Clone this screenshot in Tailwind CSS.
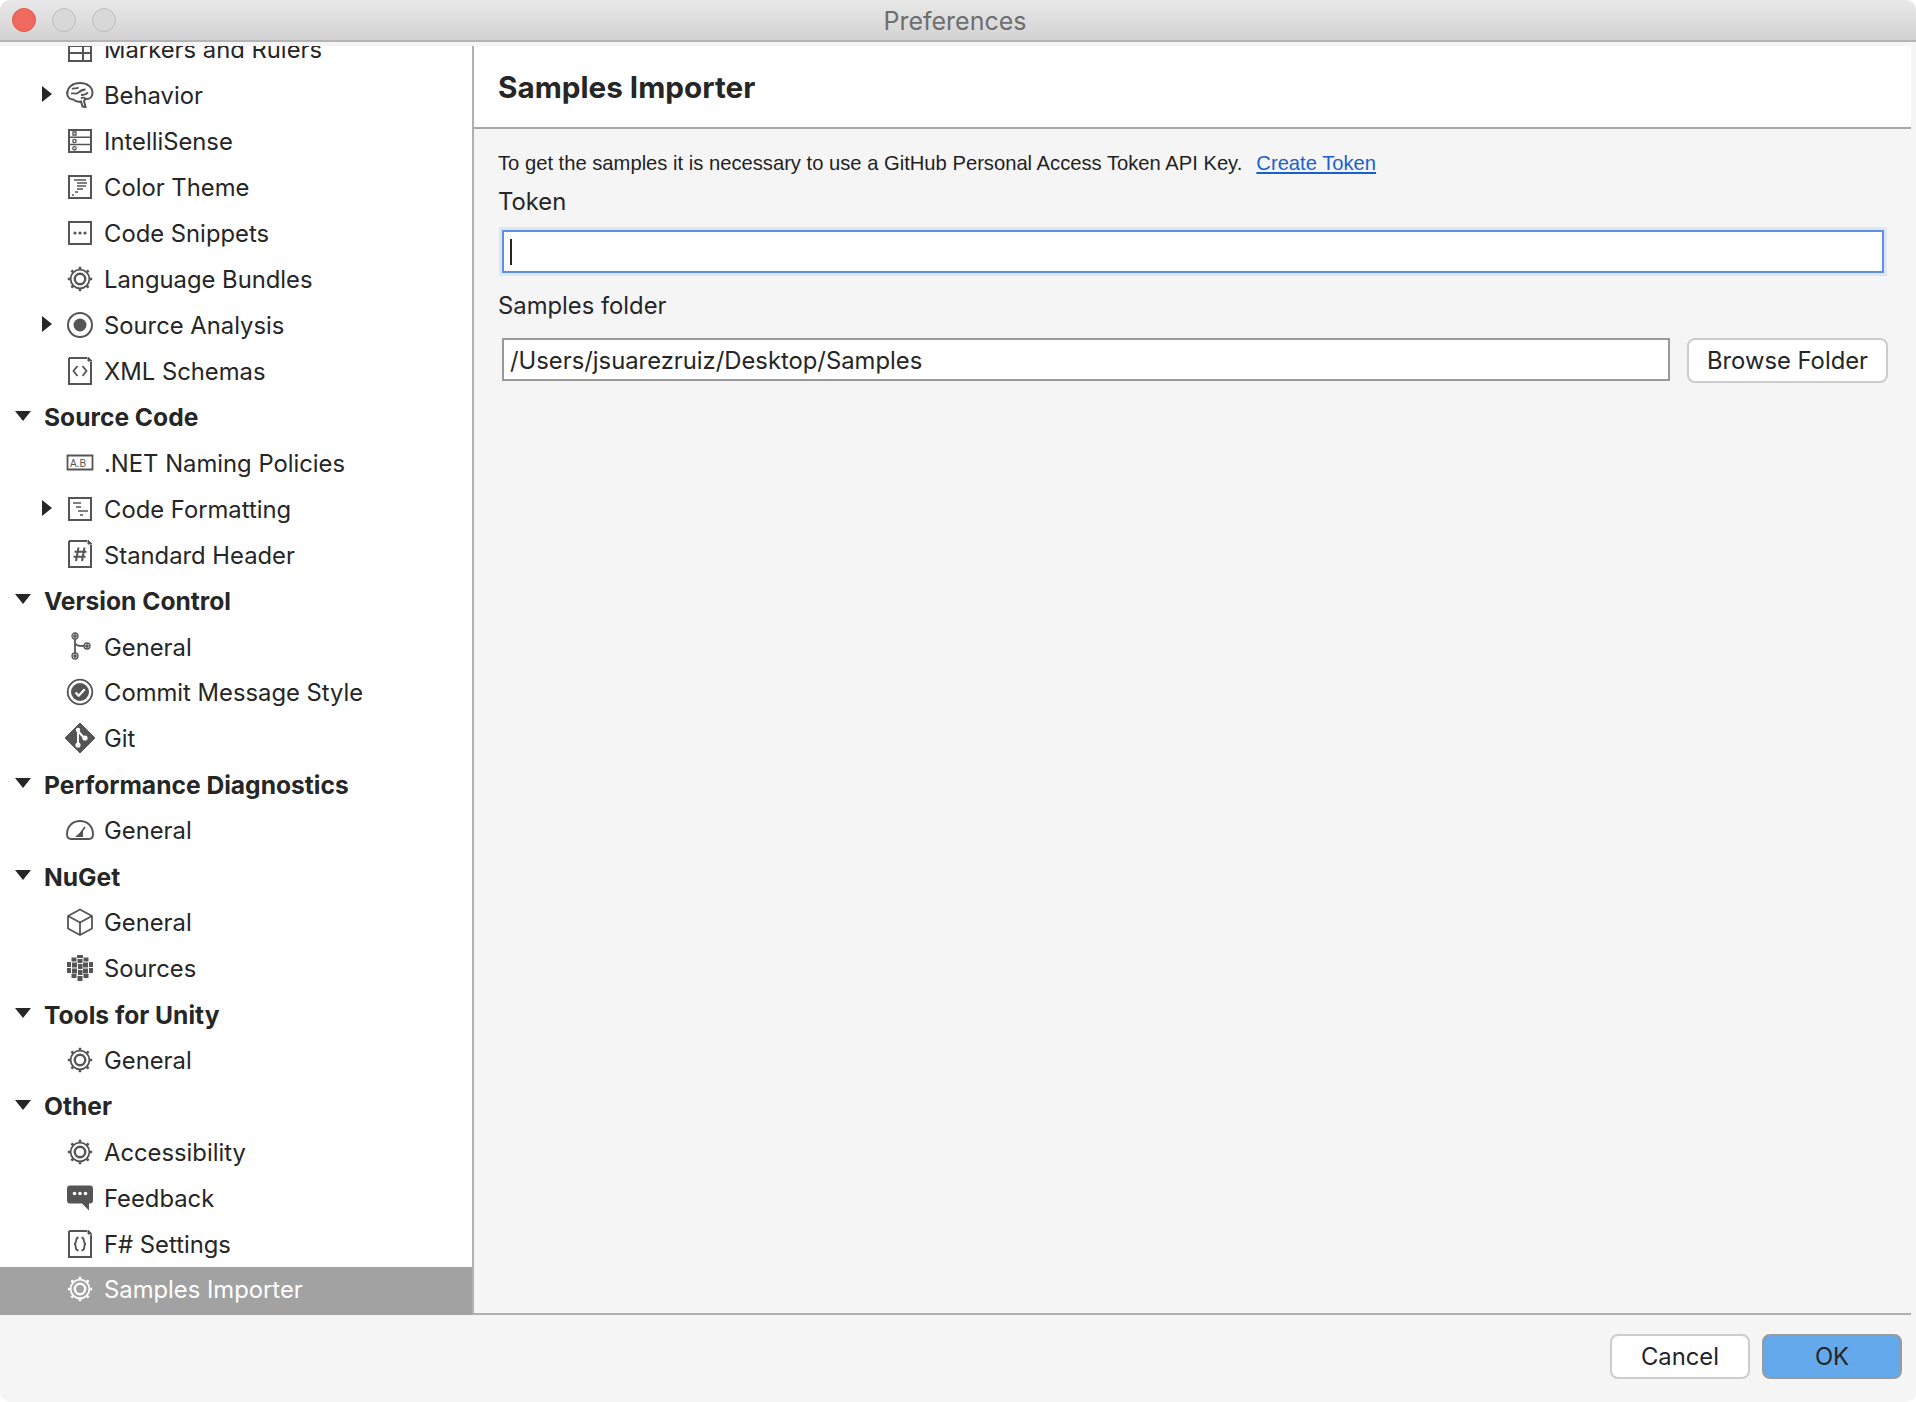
<!DOCTYPE html>
<html lang="en">
<head>
<meta charset="UTF-8">
<title>Preferences</title>
<script src="https://cdn.jsdelivr.net/npm/@tailwindcss/browser@4"></script>
</head>
<body class="bg-white font-['Inter',sans-serif] text-[23.8px] text-[#262626]">
<svg width="0" height="0" class="hidden">
  <symbol id="gear" viewBox="0 0 28 28">
    <circle cx="14" cy="14" r="9.400" fill="none" stroke="currentColor" stroke-width="1.800"/>
    <circle cx="14" cy="14" r="5.200" fill="none" stroke="currentColor" stroke-width="2.400"/>
    <path d="M14 1.800v3M14 23.200v3M1.800 14h3M23.200 14h3M5.400 5.400l2.100 2.100M20.500 20.500l2.100 2.100M5.400 22.600l2.100-2.100M20.500 7.500l2.100-2.100" stroke="currentColor" stroke-width="2.600" fill="none"/>
  </symbol>
  <symbol id="doc" viewBox="0 0 28 28">
    <path d="M3 1h18M3 1v26h22V5" fill="none" stroke="currentColor" stroke-width="2"/>
    <path d="M22 0l4 4h-4z" fill="currentColor"/>
  </symbol>
</svg>
<div class="h-screen flex flex-col rounded-[10px] overflow-hidden bg-[#f5f5f5]">
  <div class="h-[42px] shrink-0 flex items-center border-b-2 border-[#b4b4b4] bg-gradient-to-b from-[#e9e9e9] to-[#d2d2d2]">
    <div class="w-[228px] pl-[12px] flex gap-[16px]">
      <span class="w-[24px] h-[24px] rounded-full bg-[#f0695f] border border-[#e0574e]"></span>
      <span class="w-[24px] h-[24px] rounded-full bg-[#d8d8d8] border border-[#bdbdbd]"></span>
      <span class="w-[24px] h-[24px] rounded-full bg-[#d8d8d8] border border-[#bdbdbd]"></span>
    </div>
    <div class="flex-1 pr-[234px] pt-[3px] text-center text-[#6e6e6e] text-[25px]">Preferences</div>
  </div>
  <div class="h-[1273px] shrink-0 pt-[4px] flex">
    <div class="w-[474px] shrink-0 bg-white border-r-2 border-[#b0b0b0] overflow-hidden">
      <div class="-mt-[19px]">
        <div class="h-[45.96px] flex items-center pl-[42px]"><span class="w-[24px]"></span>
          <svg class="w-[28px] h-[28px] text-[#555] -mt-[2px]" viewBox="0 0 28 28" fill="none" stroke="currentColor" stroke-width="2"><path d="M3 4h22v22H3zM3 11h22M3 18h22M17 11v15"/></svg>
          <span class="ml-[10px]">Markers and Rulers</span></div>
        <div class="h-[45.96px] flex items-center pl-[42px]"><span class="w-[24px]"><svg class="w-[10px] h-[16px] -mt-[4px]" viewBox="0 0 10 16"><path d="M0 0l10 8-10 8z" fill="#262626"/></svg></span>
          <svg class="w-[28px] h-[28px] text-[#555] -mt-[2px]" viewBox="0 0 28 28" fill="none" stroke="currentColor" stroke-width="2"><path d="M1.500 11.500C1.500 6 7 2 14 2s12.500 4 12.500 9.500c0 4-2.500 6.500-6 6.500h-1l-1.500 2 1.500 6-3-.5-1.500-5c-3 .5-6 0-7.500-2-3.500 0-6.500-2.500-6.500-7z"/><path d="M6 8c2-1.500 4 .5 6.500-1.500M5 12.500c3-1 4.500 1.500 7.500-1s3.500-3 7-3M15 14c2.500 0 4 .5 7-2.500M15 17.500c1-1 3-1 4.500 0" stroke-width="1.800"/></svg>
          <span class="ml-[10px]">Behavior</span></div>
        <div class="h-[45.96px] flex items-center pl-[42px]"><span class="w-[24px]"></span>
          <svg class="w-[28px] h-[28px] text-[#555] -mt-[2px]" viewBox="0 0 28 28" fill="none" stroke="currentColor" stroke-width="2"><path d="M3 3h22v22H3z"/><path d="M3 10.300h22M3 17.600h22" stroke-width="1.500"/><path d="M7 5h3v3H7z" stroke-width="1.300"/><circle cx="8.500" cy="14" r="1.700" stroke-width="1.300"/><circle cx="8.500" cy="21.300" r="1.700" stroke-width="1.300"/></svg>
          <span class="ml-[10px]">IntelliSense</span></div>
        <div class="h-[45.96px] flex items-center pl-[42px]"><span class="w-[24px]"></span>
          <svg class="w-[28px] h-[28px] text-[#555] -mt-[2px]" viewBox="0 0 28 28" fill="none" stroke="currentColor" stroke-width="2"><path d="M3 3h22v22H3z"/><path d="M8 7h12M11 10h10M11 13h9M11 16h6M9 19h3M6 22h2" stroke-width="1.500"/></svg>
          <span class="ml-[10px]">Color Theme</span></div>
        <div class="h-[45.96px] flex items-center pl-[42px]"><span class="w-[24px]"></span>
          <svg class="w-[28px] h-[28px] text-[#555] -mt-[2px]" viewBox="0 0 28 28" fill="none" stroke="currentColor" stroke-width="2"><path d="M3 3h22v22H3z"/><circle cx="9" cy="14" r="1.600" fill="currentColor" stroke="none"/><circle cx="14" cy="14" r="1.600" fill="currentColor" stroke="none"/><circle cx="19" cy="14" r="1.600" fill="currentColor" stroke="none"/></svg>
          <span class="ml-[10px]">Code Snippets</span></div>
        <div class="h-[45.96px] flex items-center pl-[42px]"><span class="w-[24px]"></span>
          <svg class="w-[28px] h-[28px] text-[#555] -mt-[2px]"><use href="#gear"/></svg>
          <span class="ml-[10px]">Language Bundles</span></div>
        <div class="h-[45.96px] flex items-center pl-[42px]"><span class="w-[24px]"><svg class="w-[10px] h-[16px] -mt-[4px]" viewBox="0 0 10 16"><path d="M0 0l10 8-10 8z" fill="#262626"/></svg></span>
          <svg class="w-[28px] h-[28px] text-[#555] -mt-[2px]" viewBox="0 0 28 28" fill="none" stroke="currentColor" stroke-width="2"><circle cx="14" cy="14" r="12"/><circle cx="14" cy="14" r="6.500" fill="currentColor" stroke="none"/></svg>
          <span class="ml-[10px]">Source Analysis</span></div>
        <div class="h-[45.96px] flex items-center pl-[42px]"><span class="w-[24px]"></span>
          <svg class="w-[28px] h-[28px] text-[#555] -mt-[2px]" viewBox="0 0 28 28" fill="none" stroke="currentColor"><use href="#doc"/><path d="M11.500 9L7.500 14l4 5M16.500 9l4 5-4 5" stroke-width="1.800"/></svg>
          <span class="ml-[10px]">XML Schemas</span></div>

        <div class="h-[45.96px] flex items-center pl-[15px] font-bold text-[24.6px]"><span class="w-[29px]"><svg class="w-[16px] h-[10px] -mt-[4px]" viewBox="0 0 16 10"><path d="M0 0h16l-8 10z" fill="#262626"/></svg></span>Source Code</div>
        <div class="h-[45.96px] flex items-center pl-[42px]"><span class="w-[24px]"></span>
          <svg class="w-[28px] h-[28px] text-[#555] -mt-[2px]" viewBox="0 0 28 28" fill="none" stroke="currentColor" stroke-width="1.800"><path d="M1.500 6.500h25v14h-25z"/><text x="4" y="17.500" font-size="10" fill="currentColor" stroke="none" font-family="Liberation Sans">A.B</text></svg>
          <span class="ml-[10px]">.NET Naming Policies</span></div>
        <div class="h-[45.96px] flex items-center pl-[42px]"><span class="w-[24px]"><svg class="w-[10px] h-[16px] -mt-[4px]" viewBox="0 0 10 16"><path d="M0 0l10 8-10 8z" fill="#262626"/></svg></span>
          <svg class="w-[28px] h-[28px] text-[#555] -mt-[2px]" viewBox="0 0 28 28" fill="none" stroke="currentColor" stroke-width="2"><path d="M3 3h22v22H3z"/><path d="M7 8h8M10 12h5M12 16h10M14 20h3" stroke-width="1.700"/></svg>
          <span class="ml-[10px]">Code Formatting</span></div>
        <div class="h-[45.96px] flex items-center pl-[42px]"><span class="w-[24px]"></span>
          <svg class="w-[28px] h-[28px] text-[#555] -mt-[2px]" viewBox="0 0 28 28" fill="none" stroke="currentColor"><use href="#doc"/><path d="M12.500 7.500L10 21M18.500 7.500L16 21M8.500 11.800h12M7.500 16.800h12" stroke-width="2"/></svg>
          <span class="ml-[10px]">Standard Header</span></div>

        <div class="h-[45.96px] flex items-center pl-[15px] font-bold text-[24.6px]"><span class="w-[29px]"><svg class="w-[16px] h-[10px] -mt-[4px]" viewBox="0 0 16 10"><path d="M0 0h16l-8 10z" fill="#262626"/></svg></span>Version Control</div>
        <div class="h-[45.96px] flex items-center pl-[42px]"><span class="w-[24px]"></span>
          <svg class="w-[28px] h-[28px] text-[#555] -mt-[2px]" viewBox="0 0 28 28" fill="none" stroke="currentColor" stroke-width="1.300"><circle cx="9" cy="4" r="3"/><circle cx="9" cy="4" r="1.200" fill="currentColor"/><circle cx="9" cy="24" r="3"/><circle cx="9" cy="24" r="1.200" fill="currentColor"/><circle cx="21" cy="14" r="3"/><circle cx="21" cy="14" r="1.200" fill="currentColor"/><path d="M9 7v14M9 11c1 3 4 3 9 3" stroke-width="1.800"/></svg>
          <span class="ml-[10px]">General</span></div>
        <div class="h-[45.96px] flex items-center pl-[42px]"><span class="w-[24px]"></span>
          <svg class="w-[28px] h-[28px] text-[#555] -mt-[2px]" viewBox="0 0 28 28" fill="none" stroke="currentColor"><circle cx="14" cy="14" r="12.300" stroke-width="1.800"/><circle cx="14" cy="14" r="9" fill="currentColor" stroke="none"/><path d="M9.500 14.500l3.200 3.200 6-6.500" stroke="#fff" stroke-width="2.200"/></svg>
          <span class="ml-[10px]">Commit Message Style</span></div>
        <div class="h-[45.96px] flex items-center pl-[42px]"><span class="w-[24px]"></span>
          <svg class="w-[32px] h-[32px] -mx-[2px] text-[#555] -mt-[2px]" viewBox="0 0 32 32"><path d="M16 1l15 15-15 15L1 16z" fill="currentColor" stroke="currentColor" stroke-linejoin="round"/><path d="M14 6v18M14 9l7 8" stroke="#fff" stroke-width="2" fill="none"/><circle cx="14" cy="8" r="2.200" fill="#fff"/><circle cx="14" cy="23" r="2.600" fill="#fff"/><circle cx="21" cy="16" r="2.600" fill="#fff"/></svg>
          <span class="ml-[10px]">Git</span></div>

        <div class="h-[45.96px] flex items-center pl-[15px] font-bold text-[24.6px]"><span class="w-[29px]"><svg class="w-[16px] h-[10px] -mt-[4px]" viewBox="0 0 16 10"><path d="M0 0h16l-8 10z" fill="#262626"/></svg></span>Performance Diagnostics</div>
        <div class="h-[45.96px] flex items-center pl-[42px]"><span class="w-[24px]"></span>
          <svg class="w-[28px] h-[28px] text-[#555] -mt-[2px]" viewBox="0 0 28 28" fill="none" stroke="currentColor" stroke-width="1.900"><path d="M5 23h18c2.500 0 4-2 4-5 0-8-6-13-13-13S1 10 1 18c0 3 1.500 5 4 5z"/><path d="M9 21h8v-7z" fill="currentColor" stroke="none"/><path d="M14 18l5-7" stroke-width="1.700"/></svg>
          <span class="ml-[10px]">General</span></div>

        <div class="h-[45.96px] flex items-center pl-[15px] font-bold text-[24.6px]"><span class="w-[29px]"><svg class="w-[16px] h-[10px] -mt-[4px]" viewBox="0 0 16 10"><path d="M0 0h16l-8 10z" fill="#262626"/></svg></span>NuGet</div>
        <div class="h-[45.96px] flex items-center pl-[42px]"><span class="w-[24px]"></span>
          <svg class="w-[28px] h-[28px] text-[#555] -mt-[2px]" viewBox="0 0 28 28" fill="none" stroke="currentColor" stroke-width="1.800"><path d="M14 1.500l12 6.500v12.500l-12 6.500-12-6.500V8zM3 8.500l11 6 11-6M14 14.500V26" stroke-linejoin="round"/></svg>
          <span class="ml-[10px]">General</span></div>
        <div class="h-[45.96px] flex items-center pl-[42px]"><span class="w-[24px]"></span>
          <svg class="w-[28px] h-[28px] text-[#555] -mt-[2px]" viewBox="0 0 28 28" fill="currentColor"><path d="M11 1h6v3h-6zM5.500 3.500h5v4h-5zM11.500 5h5v4h-5zM17.500 3.500h5v4h-5zM1 8h4v5H1zM6 8.500h5v5H6zM12 10h4.500v5H12zM17 8.500h5v5h-5zM23 8h4v5h-4zM1 14h4v5H1zM6 14.500h5v5H6zM12 16h4.500v5H12zM17 14.500h5v5h-5zM23 14h4v5h-4zM5.500 20h5v4h-5zM17.500 20h5v4h-5zM11.500 22h5v5h-5z"/></svg>
          <span class="ml-[10px]">Sources</span></div>

        <div class="h-[45.96px] flex items-center pl-[15px] font-bold text-[24.6px]"><span class="w-[29px]"><svg class="w-[16px] h-[10px] -mt-[4px]" viewBox="0 0 16 10"><path d="M0 0h16l-8 10z" fill="#262626"/></svg></span>Tools for Unity</div>
        <div class="h-[45.96px] flex items-center pl-[42px]"><span class="w-[24px]"></span>
          <svg class="w-[28px] h-[28px] text-[#555] -mt-[2px]"><use href="#gear"/></svg>
          <span class="ml-[10px]">General</span></div>

        <div class="h-[45.96px] flex items-center pl-[15px] font-bold text-[24.6px]"><span class="w-[29px]"><svg class="w-[16px] h-[10px] -mt-[4px]" viewBox="0 0 16 10"><path d="M0 0h16l-8 10z" fill="#262626"/></svg></span>Other</div>
        <div class="h-[45.96px] flex items-center pl-[42px]"><span class="w-[24px]"></span>
          <svg class="w-[28px] h-[28px] text-[#555] -mt-[2px]"><use href="#gear"/></svg>
          <span class="ml-[10px]">Accessibility</span></div>
        <div class="h-[45.96px] flex items-center pl-[42px]"><span class="w-[24px]"></span>
          <svg class="w-[28px] h-[28px] text-[#555] -mt-[2px]" viewBox="0 0 28 28"><path d="M4 1.500h20a3 3 0 0 1 3 3v12a3 3 0 0 1-3 3h-1v7l-7-7H4a3 3 0 0 1-3-3v-12a3 3 0 0 1 3-3z" fill="currentColor"/><circle cx="8.500" cy="9.500" r="1.800" fill="#fff"/><circle cx="14" cy="9.500" r="1.800" fill="#fff"/><circle cx="19.500" cy="9.500" r="1.800" fill="#fff"/></svg>
          <span class="ml-[10px]">Feedback</span></div>
        <div class="h-[45.96px] flex items-center pl-[42px]"><span class="w-[24px]"></span>
          <svg class="w-[28px] h-[28px] text-[#555] -mt-[2px]" viewBox="0 0 28 28" fill="none" stroke="currentColor"><use href="#doc"/><path d="M12.500 7.500c-4 0-1 6.500-4.500 6.500 3.500 0-.5 6.500 4.500 6.500M15.500 7.500c4 0 1 6.500 4.500 6.500-3.500 0 .5 6.500-4.500 6.500" stroke-width="1.800"/></svg>
          <span class="ml-[10px]">F# Settings</span></div>
        <div class="h-[49px] -mt-[1px] pb-[3px] flex items-center pl-[42px] bg-[#a2a2a2] text-white"><span class="w-[24px]"></span>
          <svg class="w-[28px] h-[28px] text-white -mt-[2px]"><use href="#gear"/></svg>
          <span class="ml-[10px]">Samples Importer</span></div>
      </div>
    </div>
    <div class="flex-1 mr-[5px] flex flex-col border-b-2 border-[#b0b0b0]">
      <div class="h-[83px] shrink-0 bg-white border-b-2 border-[#a8a8a8] pl-[24px] pt-[1px] flex items-center font-bold text-[29.7px]">Samples Importer</div>
      <div class="flex-1 pl-[24px] pr-[22px] pt-[20px]">
        <div class="flex items-center h-[28px] font-['Liberation_Sans',sans-serif] text-[20.2px] text-[#1f1f1f]">
          <span>To get the samples it is necessary to use a GitHub Personal Access Token API Key.</span>
          <a class="ml-[14px] text-[#1a5fd0] underline">Create Token</a>
        </div>
        <div class="mt-[9px] h-[32px] leading-[32px]">Token</div>
        <div class="mt-[12px] ml-[4px] mr-[5px] h-[43px] bg-white border-2 border-[#5d8ee8] shadow-[0_0_0_3px_#dfe6f6] flex items-center pl-[6px]"><span class="w-[2px] h-[26px] bg-[#262626]"></span></div>
        <div class="mt-[17px] h-[32px] leading-[32px]">Samples folder</div>
        <div class="mt-[16px] ml-[4px] flex items-start">
          <div class="w-[1168px] h-[43px] bg-white border-2 border-[#999] flex items-center pl-[6px] pt-[2px]">/Users/jsuarezruiz/Desktop/Samples</div>
          <button class="ml-[17px] w-[201px] h-[45px] bg-white border-2 border-[#ccc] rounded-[8px]">Browse Folder</button>
        </div>
      </div>
    </div>
  </div>
  <div class="flex-1 flex justify-end items-start pt-[19px] pr-[14px] gap-[12px]">
    <button class="w-[140px] h-[45px] bg-white border-2 border-[#ccc] rounded-[8px]">Cancel</button>
    <button class="w-[140px] h-[45px] bg-[#63a9ec] border-2 border-[#9a9a9a] rounded-[8px]">OK</button>
  </div>
</div>
</body>
</html>
